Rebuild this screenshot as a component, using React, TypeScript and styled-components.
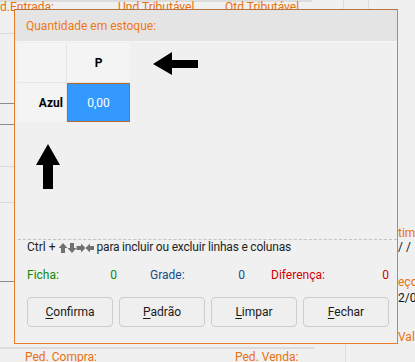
import * as React from 'react'
import styled, { createGlobalStyle } from 'styled-components'

const GlobalStyle = createGlobalStyle`
  html, body {
    margin: 0;
    padding: 0;
    background: #f0f0f0;
  }
  body {
    font-family: Roboto, 'Noto Sans', 'Liberation Sans', sans-serif;
    font-size: 12px;
    color: #1e1e1e;
  }
`

const ORANGE = '#e8700f'

const Screen = styled.div`
  position: relative;
  width: 415px;
  height: 362px;
  overflow: hidden;
  background: #f0f0f0;
  display: flex;
  flex-direction: column;
`

/* ---------- background form (mostly hidden by the dialog) ---------- */

const FormTop = styled.div`
  height: 9px;
  display: flex;
  flex-shrink: 0;
`

const TopLabels = styled.div`
  width: 314px;
  border-top: 2px solid #dcdcdc;
  display: grid;
  grid-template-columns: 118px 107px auto;
`

const FormLabel = styled.span`
  color: ${ORANGE};
  line-height: 14px;
  white-space: nowrap;
  margin-top: -2px;
`

const TopCell = styled.div<{ $w: number; $line?: boolean }>`
  width: ${(p) => p.$w}px;
  border-left: ${(p) => (p.$line ? '1px solid #dcdcdc' : 'none')};
`

const FormMiddle = styled.div`
  flex: 1;
  display: flex;
`

const LeftStrip = styled.div`
  width: 14px;
  display: flex;
  flex-direction: column;
`

const StripSeg = styled.div<{ $h: number; $dark?: boolean }>`
  height: ${(p) => p.$h}px;
  border-bottom: 1px solid ${(p) => (p.$dark ? '#8c8c8c' : '#d9d9d9')};
`

const RightStrip = styled.div`
  margin-left: auto;
  width: 17px;
  display: flex;
  flex-direction: column;
  padding-top: 217px;
  overflow: hidden;
`

const RightText = styled.span<{ $gap: number; $label?: boolean }>`
  margin-top: ${(p) => p.$gap}px;
  line-height: 14px;
  white-space: nowrap;
  color: ${(p) => (p.$label ? ORANGE : '#111')};
`

const FormBottom = styled.div`
  height: 19px;
  flex-shrink: 0;
  display: flex;
`

const BottomLabels = styled.div`
  width: 314px;
  border-top: 2px solid #dcdcdc;
  margin-top: 3px;
  display: grid;
  grid-template-columns: 210px auto;
  padding-left: 25px;
  box-sizing: border-box;
`

const BottomLabel = styled(FormLabel)`
  margin-top: 1px;
`

const BottomDivider = styled.div`
  margin-left: 31px;
  border-left: 1px solid #dcdcdc;
`

/* ---------- dialog ---------- */

const Dialog = styled.div`
  position: absolute;
  left: 14px;
  top: 9px;
  width: 384px;
  height: 335px;
  box-sizing: border-box;
  border: 1px solid #ec7a25;
  border-top-color: #b8733f;
  background: #f0f0f0;
  display: flex;
  flex-direction: column;
`

const TitleBar = styled.div`
  height: 31px;
  flex-shrink: 0;
  background: #e4e4e4;
  color: #ef7818;
  display: flex;
  align-items: center;
  padding-left: 11px;
`

const GridArea = styled.div`
  position: relative;
  flex: 1;
  border-top: 1px solid #f6f6f6;
  padding: 1px 0 0 2px;
`

const Grid = styled.div`
  display: grid;
  grid-template-columns: 49px 63px;
  grid-template-rows: 39px 39px;
  gap: 1px;
  width: max-content;
  background: #e6e6e6;
`

const Cell = styled.div<{ $align?: 'center' | 'right'; $selected?: boolean }>`
  display: flex;
  align-items: center;
  justify-content: ${(p) => (p.$align === 'right' ? 'flex-end' : 'center')};
  padding-right: ${(p) => (p.$align === 'right' ? '3px' : '0')};
  box-sizing: border-box;
  background: ${(p) => (p.$selected ? '#3399ff' : '#f4f4f4')};
  border: ${(p) => (p.$selected ? '1px solid #b5692a' : 'none')};
  color: ${(p) => (p.$selected ? '#fff' : '#000')};
  font-weight: ${(p) => (p.$selected ? 400 : 700)};
`

const Annotation = styled.svg<{ $x: number; $y: number }>`
  position: absolute;
  left: ${(p) => p.$x}px;
  top: ${(p) => p.$y}px;
`

const Footer = styled.div`
  flex-shrink: 0;
  display: flex;
  flex-direction: column;
  margin-left: 3px;
  border-top: 1px dashed #c4c4c4;
  padding: 0 0 16px 9px;
`

const Hint = styled.div`
  height: 15px;
  line-height: 15px;
  display: flex;
  align-items: center;
  gap: 3px;
  white-space: nowrap;
`

const HintText = styled.span`
  letter-spacing: -0.2px;
`

const Totals = styled.div`
  margin-top: 12px;
  height: 16px;
  display: flex;
  align-items: center;
`

const TotalGroup = styled.div<{ $w: number; $ml: number; $color: string }>`
  width: ${(p) => p.$w}px;
  margin-left: ${(p) => p.$ml}px;
  color: ${(p) => p.$color};
  display: flex;
  justify-content: space-between;
`

const Buttons = styled.div`
  margin-top: 14px;
  display: grid;
  grid-template-columns: repeat(4, 86px);
  column-gap: 6px;
`

const Button = styled.button`
  height: 30px;
  box-sizing: border-box;
  border: 1px solid #cdcdcd;
  border-radius: 4px;
  background: #efefef;
  font-family: inherit;
  font-size: 12px;
  color: #1a1a1a;
  padding: 0;
  u {
    text-decoration: underline;
    text-underline-offset: 2px;
  }
`

function KeyArrows() {
  return (
    <svg width="35" height="10" viewBox="0 0 35 10" fill="#707070">
      <path d="M4 0 L8.5 5 L6 5 L6 10 L2 10 L2 5 L-0.5 5 Z" />
      <path d="M13 10 L8.5 5 L11 5 L11 0 L15 0 L15 5 L17.5 5 Z" />
      <path d="M17.5 3 L22 3 L22 0.5 L26.5 5 L22 9.5 L22 7 L17.5 7 Z" />
      <path d="M35 3 L31 3 L31 0.5 L26.5 5 L31 9.5 L31 7 L35 7 Z" />
    </svg>
  )
}

const buttons = ['Confirma', 'Padrão', 'Limpar', 'Fechar']

export default function App() {
  return (
    <Screen>
      <GlobalStyle />

      <FormTop>
        <TopLabels>
          <FormLabel>d.Entrada:</FormLabel>
          <FormLabel>Und Tributável</FormLabel>
          <FormLabel>Qtd Tributável</FormLabel>
        </TopLabels>
        <TopCell $w={31} />
        <TopCell $w={24} $line />
        <TopCell $w={46} $line />
      </FormTop>

      <FormMiddle>
        <LeftStrip>
          <StripSeg $h={24} />
          <StripSeg $h={69} $dark />
          <StripSeg $h={20} $dark />
          <StripSeg $h={41} />
          <StripSeg $h={35} />
          <StripSeg $h={78} $dark />
        </LeftStrip>
        <RightStrip>
          <RightText $gap={0} $label>tim</RightText>
          <RightText $gap={0}>/ /</RightText>
          <RightText $gap={21} $label>eço</RightText>
          <RightText $gap={2}>2/05</RightText>
          <RightText $gap={25} $label>Vali</RightText>
        </RightStrip>
      </FormMiddle>

      <FormBottom>
        <BottomLabels>
          <BottomLabel>Ped. Compra:</BottomLabel>
          <BottomLabel>Ped. Venda:</BottomLabel>
        </BottomLabels>
        <BottomDivider />
      </FormBottom>

      <Dialog>
        <TitleBar>Quantidade em estoque:</TitleBar>

        <GridArea>
          <Grid>
            <Cell />
            <Cell>P</Cell>
            <Cell $align="right">Azul</Cell>
            <Cell $selected>0,00</Cell>
          </Grid>

          {/* annotation arrows drawn over the screenshot */}
          <Annotation $x={138} $y={10} width="46" height="24" viewBox="0 0 46 24">
            <path d="M0 12 L19 0 L19 8 L45 8 L45 16 L19 16 L19 23 Z" fill="#000" />
          </Annotation>
          <Annotation $x={21} $y={102} width="25" height="46" viewBox="0 0 25 46">
            <path d="M12 0 L24 21 L17 21 L17 45 L7 45 L7 21 L0 21 Z" fill="#000" />
          </Annotation>
        </GridArea>

        <Footer>
          <Hint>
            <span>Ctrl +</span>
            <KeyArrows />
            <HintText>para incluir ou excluir linhas e colunas</HintText>
          </Hint>

          <Totals>
            <TotalGroup $w={90} $ml={0} $color="#0c8a0c">
              <span>Ficha:</span>
              <span>0</span>
            </TotalGroup>
            <TotalGroup $w={95} $ml={33} $color="#174c8c">
              <span>Grade:</span>
              <span>0</span>
            </TotalGroup>
            <TotalGroup $w={118} $ml={26} $color="#d00000">
              <span>Diferença:</span>
              <span>0</span>
            </TotalGroup>
          </Totals>

          <Buttons>
            {buttons.map((b) => (
              <Button key={b}>
                <u>{b[0]}</u>
                {b.slice(1)}
              </Button>
            ))}
          </Buttons>
        </Footer>
      </Dialog>
    </Screen>
  )
}
